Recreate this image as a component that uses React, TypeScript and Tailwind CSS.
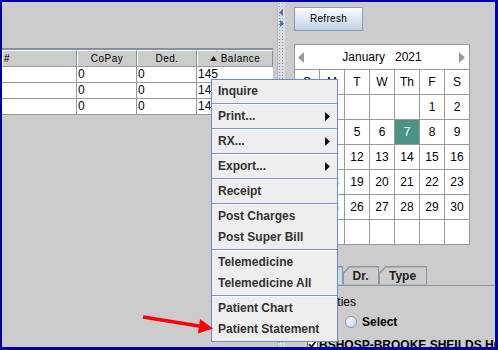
import React from 'react'

const font = "font-['Liberation_Sans',Arial,sans-serif]"

function SubArrow() {
  return (
    <svg width="5" height="9" viewBox="0 0 5 9" className="absolute right-[7px] top-[6px]">
      <path d="M0 0 L5 4.5 L0 9 Z" fill="#111" />
    </svg>
  )
}

function MenuItem({ label, sub }: { label: string; sub?: boolean }) {
  return (
    <div className="relative h-[21px] pl-[6px] text-[12px] leading-[21px] font-bold text-[#333333]">
      {label}
      {sub && <SubArrow />}
    </div>
  )
}

function Sep() {
  return (
    <div className="h-[4px] py-[1px]">
      <div className="h-[1px] bg-[#7b96cc]" />
      <div className="h-[1px] bg-white" />
    </div>
  )
}

function ContextMenu() {
  return (
    <div className="absolute left-[211px] top-[79px] w-[127px] h-[263px] border border-[#6d8bc9] bg-[#eeeeee] py-[1px]">
      <MenuItem label="Inquire" />
      <Sep />
      <MenuItem label="Print..." sub />
      <Sep />
      <MenuItem label="RX..." sub />
      <Sep />
      <MenuItem label="Export..." sub />
      <Sep />
      <MenuItem label="Receipt" />
      <Sep />
      <MenuItem label="Post Charges" />
      <MenuItem label="Post Super Bill" />
      <Sep />
      <MenuItem label="Telemedicine" />
      <MenuItem label="Telemedicine All" />
      <Sep />
      <MenuItem label="Patient Chart" />
      <MenuItem label="Patient Statement" />
    </div>
  )
}

function HeaderCell({ w, children, align = 'center' }: { w: string; children?: React.ReactNode; align?: string }) {
  return (
    <div
      className={`${w} h-full flex items-center ${align === 'left' ? 'justify-start pl-[1px]' : 'justify-center'} border-l border-t border-white border-r border-r-[#8e8e8e] text-[10px] tracking-[0.5px] text-black`}
    >
      {children}
    </div>
  )
}

function Row({ bal }: { bal: string }) {
  return (
    <div className="flex h-[16px] border-b border-[#999999] bg-white text-[12px] leading-[15px] text-black">
      <div className="w-[75px] border-r border-[#999999]" />
      <div className="w-[60px] border-r border-[#999999] pl-[1px]">0</div>
      <div className="w-[60px] border-r border-[#999999] pl-[1px]">0</div>
      <div className="w-[75px] pl-[1px]">{bal}</div>
    </div>
  )
}

function Table() {
  return (
    <div className="w-[271px] mt-[46px] border-t-2 border-[#8391a0]">
      <div className="flex h-[17px] bg-[#cccccc] border-b border-[#999999]">
        <HeaderCell w="w-[75px]" align="left">#</HeaderCell>
        <HeaderCell w="w-[60px]">CoPay</HeaderCell>
        <HeaderCell w="w-[60px]">Ded.</HeaderCell>
        <HeaderCell w="w-[76px]">
          <svg width="7" height="5" viewBox="0 0 7 5" className="mr-[4px]">
            <path d="M0 5 L3.5 0 L7 5 Z" fill="#222" />
          </svg>
          Balance
        </HeaderCell>
      </div>
      <Row bal="145" />
      <Row bal="145" />
      <Row bal="145" />
    </div>
  )
}

function Splitter() {
  return (
    <div className="relative w-[8px] h-full border-l border-[#b8b8b8] bg-[#dcdce4] bg-[radial-gradient(circle,#8797b8_0.6px,transparent_0.8px)] bg-[length:3px_3px]">
      <svg width="6" height="20" viewBox="0 0 6 20" className="absolute left-[1px] top-[6px]">
        <path d="M4 1 L0 4.5 L4 8 Z" fill="#4f6fb5" />
        <path d="M1 12 L5 15.5 L1 19 Z" fill="#4f6fb5" />
      </svg>
    </div>
  )
}

const weeks: (number | null)[][] = [
  [null, null, null, null, null, 1, 2],
  [3, 4, 5, 6, 7, 8, 9],
  [10, 11, 12, 13, 14, 15, 16],
  [17, 18, 19, 20, 21, 22, 23],
  [24, 25, 26, 27, 28, 29, 30],
  [31, null, null, null, null, null, null],
]

function Calendar() {
  const days = ['S', 'M', 'T', 'W', 'Th', 'F', 'S']
  return (
    <div className="w-[176px] mt-[13px] border-l border-t border-[#999999] text-[12px] text-black">
      <div className="relative h-[25px] border-r border-b border-[#999999] bg-white flex items-center justify-center">
        <svg width="6" height="11" viewBox="0 0 6 11" className="absolute left-[3px] top-[7px]">
          <path d="M6 0 L0 5.5 L6 11 Z" fill="#9a9a9a" />
        </svg>
        <span className="mr-[10px]">January</span>
        <span>2021</span>
        <svg width="6" height="11" viewBox="0 0 6 11" className="absolute right-[4px] top-[7px]">
          <path d="M0 0 L6 5.5 L0 11 Z" fill="#9a9a9a" />
        </svg>
      </div>
      <div className="grid grid-cols-[repeat(7,25px)]">
        {days.map((d, i) => (
          <div key={i} className="h-[25px] border-r border-b border-[#999999] bg-white flex items-center justify-center">
            {d}
          </div>
        ))}
        {weeks.flat().map((d, i) => (
          <div
            key={'d' + i}
            className={`h-[25px] border-r border-b border-[#999999] flex items-center justify-center ${d === 7 ? 'bg-[#4b9382] text-white' : 'bg-white'}`}
          >
            {d ?? ''}
          </div>
        ))}
      </div>
    </div>
  )
}

function Tab({ label, selected, w }: { label: string; selected?: boolean; w: string }) {
  return (
    <div className={`${w} h-[19px] bg-[#8a96a4] pt-[1px] pr-[1px] [clip-path:polygon(0_7px,7px_0,100%_0,100%_100%,0_100%)]`}>
      <div
        className={`h-full ${selected ? 'bg-[#c9dcef]' : 'bg-[#cccccc]'} [clip-path:polygon(1px_7px,7px_1px,100%_1px,100%_100%,1px_100%)] flex items-center justify-center text-[12px] font-bold text-[#222]`}
      >
        {label}
      </div>
    </div>
  )
}

function RightPanel() {
  return (
    <div className="flex-1 h-full overflow-hidden">
      <div className="pl-[9px] pt-[3px]">
        <button className="w-[69px] h-[24px] border border-[#8b9bb4] bg-gradient-to-b from-[#fbfdff] to-[#bfd2e6] text-[10px] tracking-[0.3px] text-black">
          Refresh
        </button>
        <Calendar />
      </div>
      <div className="mt-[21px] pl-[4px]">
        <div className="flex items-end border-b border-[#8a96a4]">
          <Tab label="" selected w="w-[54px]" />
          <Tab label="Dr." w="w-[36px]" />
          <Tab label="Type" w="w-[48px]" />
        </div>
        <div className="pl-[9px] pt-[9px] text-[12px] text-black leading-[14px]">Specialties</div>
        <div className="flex items-center pl-[56px] mt-[6px] h-[14px]">
          <div className="w-[12px] h-[12px] rounded-full border border-[#8a96a4] bg-gradient-to-br from-white to-[#c3d3e6]" />
          <span className="ml-[5px] text-[12px] font-bold text-black">Select</span>
        </div>
        <div className="flex items-center pl-[18px] mt-[9px] h-[14px] whitespace-nowrap">
          <div className="w-[11px] h-[11px] border border-[#6b7785] bg-white flex items-center justify-center">
            <svg width="9" height="9" viewBox="0 0 9 9">
              <path d="M1 4 L3.5 7 L8 1" stroke="#111" strokeWidth="1.8" fill="none" />
            </svg>
          </div>
          <span className="ml-[1px] text-[12px] font-bold text-black">BSHOSP-BROOKE SHEILDS HOSPITAL</span>
        </div>
      </div>
    </div>
  )
}

function RedArrow() {
  return (
    <svg width="80" height="30" viewBox="0 0 80 30" className="absolute left-[140px] top-[310px]">
      <line x1="3" y1="7" x2="62" y2="16.5" stroke="#ff0000" strokeWidth="3.5" />
      <path d="M60 9 L73 18.5 L58 23.5 Z" fill="#ff0000" />
    </svg>
  )
}

export default function App() {
  return (
    <div className={`relative w-[498px] h-[350px] overflow-hidden bg-[#0000a8] pl-[2px] pt-[2px] pr-[3px] pb-[3px] ${font}`}>
      <div className="flex h-full bg-[#cccccc]">
        <div className="w-[275px] h-full">
          <Table />
        </div>
        <Splitter />
        <RightPanel />
      </div>
      <ContextMenu />
      <RedArrow />
    </div>
  )
}
